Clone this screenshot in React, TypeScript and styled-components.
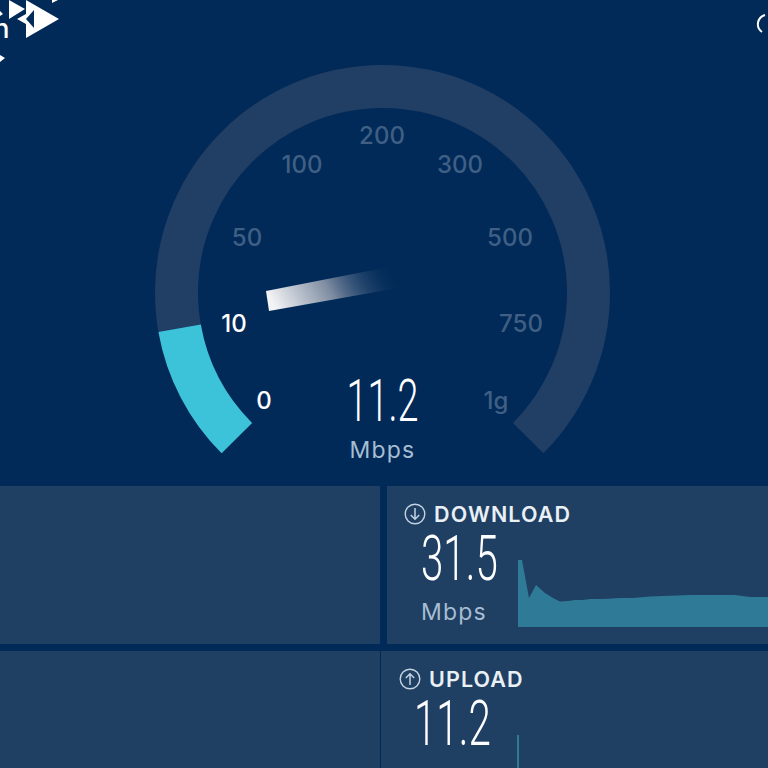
import styled, { createGlobalStyle } from 'styled-components'

const NAVY = '#012a58'
const PANEL = '#1f3f63'
const TRACK = '#213f65'

const GlobalStyles = createGlobalStyle`
  html, body {
    margin: 0;
    height: 100%;
    background: ${NAVY};
    overflow: hidden;
  }
  * {
    box-sizing: border-box;
  }
`

// gauge geometry, relative to the svg box
const CX = 233.5
const CY = 232.5
const R = 206

function polar(deg: number, r = R) {
  const a = ((deg - 90) * Math.PI) / 180
  return `${(CX + r * Math.cos(a)).toFixed(2)} ${(CY + r * Math.sin(a)).toFixed(2)}`
}

function arc(from: number, to: number) {
  const large = to - from > 180 ? 1 : 0
  return `M ${polar(from)} A ${R} ${R} 0 ${large} 1 ${polar(to)}`
}

const TICKS = [
  { label: '0', x: 115, y: 349, on: true },
  { label: '10', x: 85, y: 272, on: true },
  { label: '50', x: 98, y: 186, on: false },
  { label: '100', x: 153, y: 113, on: false },
  { label: '200', x: 233, y: 84, on: false },
  { label: '300', x: 311, y: 113, on: false },
  { label: '500', x: 361, y: 186, on: false },
  { label: '750', x: 372, y: 272, on: false },
  { label: '1g', x: 347, y: 349, on: false },
]

const CHART =
  'M0 67 L0 0 L4 0 L11 38 L18 25 L27 33 L35 38 L42 41.5 L50 41 L57 40 L65 40 L72 39 L85 39 L102 38 L115 38 L132 36.5 L172 35 L217 35 L232 37 L250 37 L250 67 Z'

function Gauge() {
  return (
    <GaugeSvg viewBox="0 0 470 400">
      <defs>
        <linearGradient id="needle" x1="0" y1="0" x2="1" y2="0" gradientTransform="rotate(-10 0.5 0.5)">
          <stop offset="0" stopColor="#f2f3f5" />
          <stop offset="0.45" stopColor="#7f8da2" />
          <stop offset="1" stopColor={NAVY} stopOpacity="0" />
        </linearGradient>
      </defs>
      <path d={arc(-135, 135)} fill="none" stroke={TRACK} strokeWidth={43} />
      <path d={arc(-135, -100)} fill="none" stroke="#3cc3da" strokeWidth={43} />
      <polygon points="117,231 120,251 255,227 250,205" fill="url(#needle)" />
      {TICKS.map(t => (
        <Tick key={t.label} x={t.x} y={t.y} $on={t.on}>
          {t.label}
        </Tick>
      ))}
      <GaugeValue x={CX} y={361} textLength={72} lengthAdjust="spacingAndGlyphs">
        11.2
      </GaugeValue>
      <GaugeUnit x={CX} y={398}>
        Mbps
      </GaugeUnit>
    </GaugeSvg>
  )
}

function ArrowCircle({ up }: { up?: boolean }) {
  return (
    <svg width="22" height="22" viewBox="0 0 22 22" fill="none" stroke="#c3d3e2">
      <circle cx="11" cy="11" r="9.8" strokeWidth="1.4" />
      {up ? (
        <path d="M11 17V6M6.8 10L11 5.8L15.2 10" strokeWidth="1.5" />
      ) : (
        <path d="M11 5V16M6.8 12L11 16.2L15.2 12" strokeWidth="1.5" />
      )}
    </svg>
  )
}

function App() {
  return (
    <>
      <GlobalStyles />
      <Page>
        <GaugeSection>
          <Logo viewBox="0 0 64 64">
            <text x="9.5" y="38" fontFamily="Inter, sans-serif" fontSize="27" fontWeight="500" textAnchor="end" fill="#fff">
              n
            </text>
            <polygon points="9,0 25,9 9,19" fill="#fff" />
            <polygon points="26,0 59,19 26,38" fill="#fff" />
            <polygon points="34,10 34,28 26,19" fill={NAVY} />
            <polygon points="17,19 26,14 26,24" fill="#fff" />
            <polygon points="52,0 58,0 52,3" fill="#fff" />
            <polygon points="0,11 3,14 0,16" fill="#fff" />
            <polygon points="0,55 5,58 0,62" fill="#fff" />
          </Logo>
          <RefreshMark viewBox="0 0 12 22">
            <path d="M9 2 A 9.5 9.5 0 0 0 6 19" fill="none" stroke="#fff" strokeWidth="2" />
          </RefreshMark>
          <Gauge />
        </GaugeSection>

        <PanelRow $gap={7}>
          <Panel />
          <Panel $inset={17} $top={16}>
            <PanelTitle>
              <ArrowCircle />
              DOWNLOAD
            </PanelTitle>
            <PanelBody $indent={17}>
              <Stat>
                <StatValue>31.5</StatValue>
                <StatUnit>Mbps</StatUnit>
              </Stat>
              <ChartSvg viewBox="0 0 250 67" preserveAspectRatio="none">
                <path d={CHART} fill="#2f7a97" />
              </ChartSvg>
            </PanelBody>
          </Panel>
        </PanelRow>

        <PanelRow $gap={1}>
          <Panel />
          <Panel $inset={18} $top={16}>
            <PanelTitle>
              <ArrowCircle up />
              UPLOAD
            </PanelTitle>
            <PanelBody $indent={15}>
              <Stat>
                <StatValue>11.2</StatValue>
              </Stat>
              <UploadTrace />
            </PanelBody>
          </Panel>
        </PanelRow>
      </Page>
    </>
  )
}

const Page = styled.div`
  position: relative;
  width: 768px;
  height: 768px;
  overflow: hidden;
  display: flex;
  flex-direction: column;
  gap: 7px;
  background: ${NAVY};
  font-family: Inter, 'Liberation Sans', sans-serif;
`

const GaugeSection = styled.section`
  position: relative;
  flex: 0 0 479px;
  display: flex;
  justify-content: center;
  padding-top: 60px;
`

const GaugeSvg = styled.svg`
  width: 470px;
  height: 400px;
  margin-right: 1px;
  overflow: visible;
`

const Tick = styled.text<{ $on: boolean }>`
  font-family: Inter, sans-serif;
  font-size: 24px;
  font-weight: 500;
  text-anchor: middle;
  fill: ${props => (props.$on ? '#ffffff' : '#3f5f84')};
`

const GaugeValue = styled.text`
  font-family: Roboto, sans-serif;
  font-size: 60px;
  font-weight: 300;
  text-anchor: middle;
  fill: #ffffff;
`

const GaugeUnit = styled.text`
  font-family: Inter, sans-serif;
  font-size: 23px;
  font-weight: 400;
  letter-spacing: 1.2px;
  text-anchor: middle;
  fill: #a6bdd2;
`

const Logo = styled.svg`
  position: absolute;
  top: 0;
  left: 0;
  width: 64px;
  height: 64px;
`

const RefreshMark = styled.svg`
  position: absolute;
  top: 13px;
  right: 0;
  width: 12px;
  height: 22px;
`

const PanelRow = styled.div<{ $gap: number }>`
  display: grid;
  grid-template-columns: 380px 1fr;
  column-gap: ${props => props.$gap}px;
  background: ${NAVY};
`

const Panel = styled.div<{ $inset?: number; $top?: number }>`
  height: 158px;
  padding: ${props => props.$top ?? 0}px 0 0 ${props => props.$inset ?? 0}px;
  background: ${PANEL};
  display: flex;
  flex-direction: column;
`

const PanelTitle = styled.h2`
  margin: 0 0 1px;
  display: flex;
  align-items: center;
  gap: 8px;
  font-size: 21.5px;
  line-height: 24px;
  font-weight: 600;
  letter-spacing: 1.1px;
  color: #e9f0f6;
`

const PanelBody = styled.div<{ $indent: number }>`
  display: flex;
  align-items: flex-start;
  padding-left: ${props => props.$indent}px;
`

const Stat = styled.div`
  flex: 0 0 97px;
  min-width: 0;
  display: flex;
  flex-direction: column;
`

const StatValue = styled.span`
  font-family: Roboto, sans-serif;
  font-size: 63px;
  line-height: 64px;
  font-weight: 300;
  color: #ffffff;
  transform: scaleX(0.64);
  transform-origin: left center;
`

const StatUnit = styled.span`
  margin-top: 7px;
  font-size: 23px;
  line-height: 28px;
  font-weight: 400;
  letter-spacing: 1.2px;
  color: #a6bdd2;
`

const ChartSvg = styled.svg`
  flex: 0 0 250px;
  width: 250px;
  height: 67px;
  margin-top: 33px;
`

const UploadTrace = styled.div`
  width: 2px;
  height: 40px;
  margin: 43px 0 0 6px;
  background: #2f7a97;
`

export default App
